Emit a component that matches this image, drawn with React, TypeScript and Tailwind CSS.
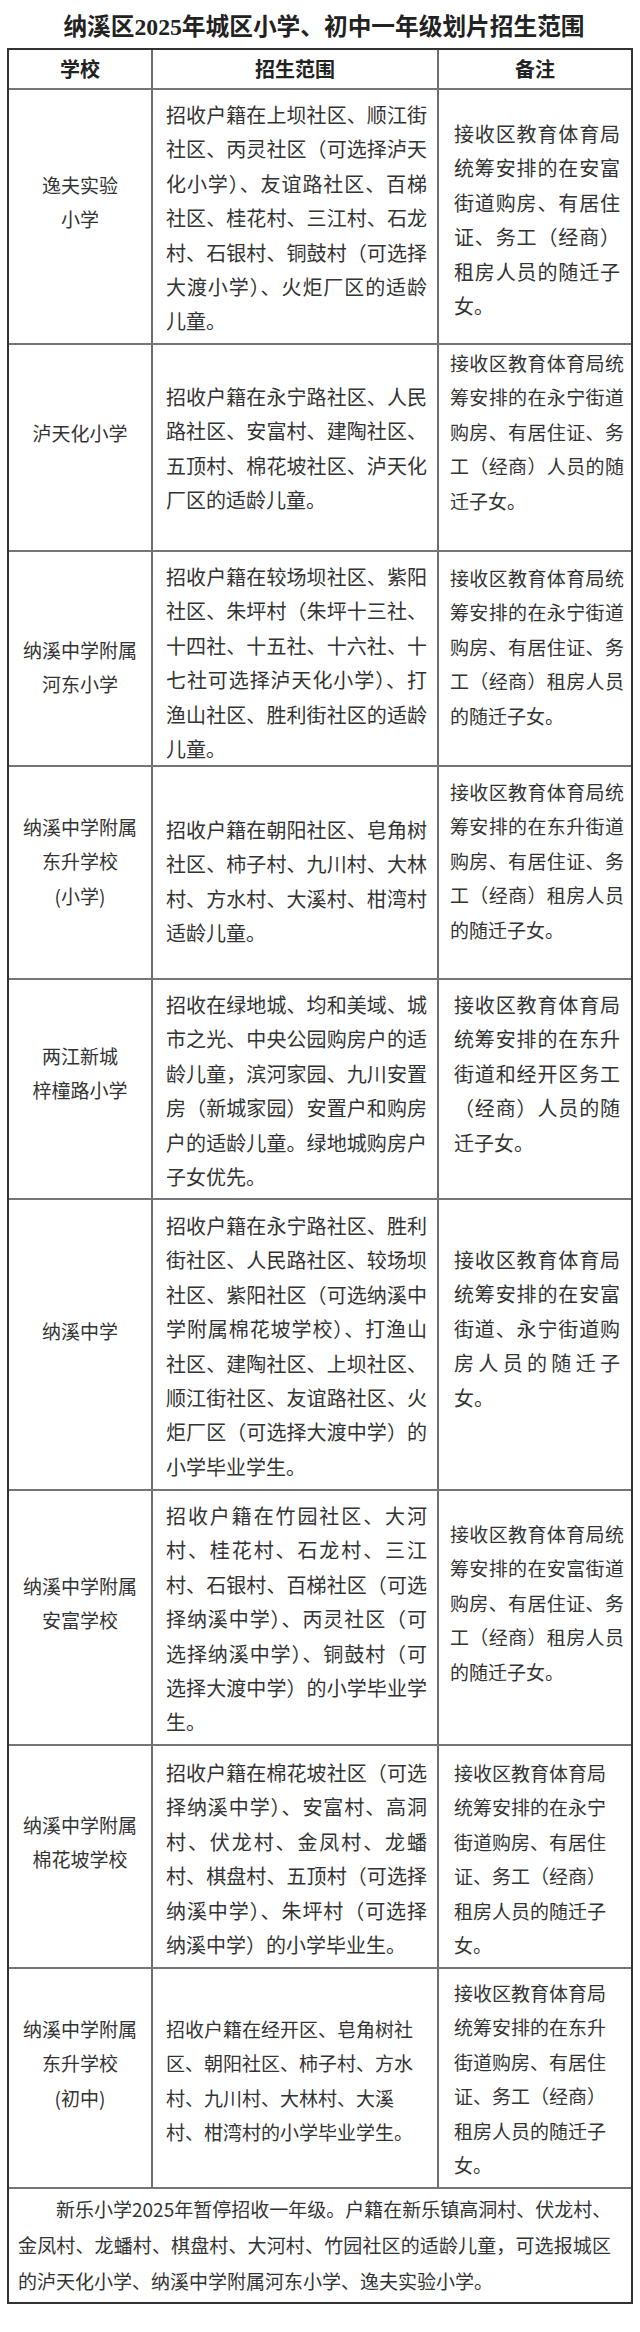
import React from "react";

type Cell = {
  lines: string[];
  cls: string;
  justify?: boolean;
};

type Row = {
  h: string;
  c1: Cell;
  c2: Cell;
  c3: Cell;
};

const C2 = "pl-[13px] pr-[10px] text-[20px]";
const C2S = "pl-[13px] pr-[10px] text-[19px]";
const C3A = "pl-[15px] pr-[11px] text-[20px]";
const C3B = "pl-[11px] pr-[7px] text-[19px]";
const C3C = "pl-[15px] pr-[11px] text-[19px]";

const rows: Row[] = [
  {
    h: "h-[255px]",
    c1: { lines: ["逸夫实验", "小学"], cls: "pt-[78px]" },
    c2: {
      lines: [
        "招收户籍在上坝社区、顺江街",
        "社区、丙灵社区（可选择泸天",
        "化小学）、友谊路社区、百梯",
        "社区、桂花村、三江村、石龙",
        "村、石银村、铜鼓村（可选择",
        "大渡小学）、火炬厂区的适龄",
        "儿童。",
      ],
      cls: "pt-[8px] " + C2,
      justify: true,
    },
    c3: {
      lines: ["接收区教育体育局", "统筹安排的在安富", "街道购房、有居住", "证、务工（经商）", "租房人员的随迁子", "女。"],
      cls: "pt-[27px] " + C3A,
      justify: true,
    },
  },
  {
    h: "h-[207px]",
    c1: { lines: ["泸天化小学"], cls: "pt-[71px]" },
    c2: {
      lines: ["招收户籍在永宁路社区、人民", "路社区、安富村、建陶社区、", "五顶村、棉花坡社区、泸天化", "厂区的适龄儿童。"],
      cls: "pt-[35px] " + C2,
      justify: true,
    },
    c3: {
      lines: ["接收区教育体育局统", "筹安排的在永宁街道", "购房、有居住证、务", "工（经商）人员的随", "迁子女。"],
      cls: "pt-[1px] " + C3B,
      justify: true,
    },
  },
  {
    h: "h-[215px]",
    c1: { lines: ["纳溪中学附属", "河东小学"], cls: "pt-[81px]" },
    c2: {
      lines: [
        "招收户籍在较场坝社区、紫阳",
        "社区、朱坪村（朱坪十三社、",
        "十四社、十五社、十六社、十",
        "七社可选择泸天化小学）、打",
        "渔山社区、胜利街社区的适龄",
        "儿童。",
      ],
      cls: "pt-[8px] " + C2,
      justify: true,
    },
    c3: {
      lines: ["接收区教育体育局统", "筹安排的在永宁街道", "购房、有居住证、务", "工（经商）租房人员", "的随迁子女。"],
      cls: "pt-[9px] " + C3B,
      justify: true,
    },
  },
  {
    h: "h-[213px]",
    c1: { lines: ["纳溪中学附属", "东升学校", "(小学)"], cls: "pt-[43px]" },
    c2: {
      lines: ["招收户籍在朝阳社区、皂角树", "社区、柿子村、九川村、大林", "村、方水村、大溪村、柑湾村", "适龄儿童。"],
      cls: "pt-[46px] " + C2,
      justify: true,
    },
    c3: {
      lines: ["接收区教育体育局统", "筹安排的在东升街道", "购房、有居住证、务", "工（经商）租房人员", "的随迁子女。"],
      cls: "pt-[8px] " + C3B,
      justify: true,
    },
  },
  {
    h: "h-[220px]",
    c1: { lines: ["两江新城", "梓橦路小学"], cls: "pt-[59px]" },
    c2: {
      lines: [
        "招收在绿地城、均和美域、城",
        "市之光、中央公园购房户的适",
        "龄儿童，滨河家园、九川安置",
        "房（新城家园）安置户和购房",
        "户的适龄儿童。绿地城购房户",
        "子女优先。",
      ],
      cls: "pt-[8px] " + C2,
      justify: true,
    },
    c3: {
      lines: ["接收区教育体育局", "统筹安排的在东升", "街道和经开区务工", "（经商）人员的随", "迁子女。"],
      cls: "pt-[8px] " + C3A,
      justify: true,
    },
  },
  {
    h: "h-[291px]",
    c1: { lines: ["纳溪中学"], cls: "pt-[114px]" },
    c2: {
      lines: [
        "招收户籍在永宁路社区、胜利",
        "街社区、人民路社区、较场坝",
        "社区、紫阳社区（可选纳溪中",
        "学附属棉花坡学校）、打渔山",
        "社区、建陶社区、上坝社区、",
        "顺江街社区、友谊路社区、火",
        "炬厂区（可选择大渡中学）的",
        "小学毕业学生。",
      ],
      cls: "pt-[9px] " + C2,
      justify: true,
    },
    c3: {
      lines: ["接收区教育体育局", "统筹安排的在安富", "街道、永宁街道购", "房人员的随迁子", "女。"],
      cls: "pt-[43px] " + C3A,
      justify: true,
    },
  },
  {
    h: "h-[255px]",
    c1: { lines: ["纳溪中学附属", "安富学校"], cls: "pt-[78px]" },
    c2: {
      lines: [
        "招收户籍在竹园社区、大河",
        "村、桂花村、石龙村、三江",
        "村、石银村、百梯社区（可选",
        "择纳溪中学）、丙灵社区（可",
        "选择纳溪中学）、铜鼓村（可",
        "选择大渡中学）的小学毕业学",
        "生。",
      ],
      cls: "pt-[8px] " + C2,
      justify: true,
    },
    c3: {
      lines: ["接收区教育体育局统", "筹安排的在安富街道", "购房、有居住证、务", "工（经商）租房人员", "的随迁子女。"],
      cls: "pt-[26px] " + C3B,
      justify: true,
    },
  },
  {
    h: "h-[223px]",
    c1: { lines: ["纳溪中学附属", "棉花坡学校"], cls: "pt-[62px]" },
    c2: {
      lines: [
        "招收户籍在棉花坡社区（可选",
        "择纳溪中学）、安富村、高洞",
        "村、伏龙村、金凤村、龙蟠",
        "村、棋盘村、五顶村（可选择",
        "纳溪中学）、朱坪村（可选择",
        "纳溪中学）的小学毕业生。",
      ],
      cls: "pt-[10px] " + C2,
      justify: true,
    },
    c3: {
      lines: ["接收区教育体育局", "统筹安排的在永宁", "街道购房、有居住", "证、务工（经商）", "租房人员的随迁子", "女。"],
      cls: "pt-[10px] " + C3C,
    },
  },
  {
    h: "h-[220px]",
    c1: { lines: ["纳溪中学附属", "东升学校", "(初中)"], cls: "pt-[43px]" },
    c2: {
      lines: ["招收户籍在经开区、皂角树社", "区、朝阳社区、柿子村、方水", "村、九川村、大林村、大溪", "村、柑湾村的小学毕业学生。"],
      cls: "pt-[43px] " + C2S,
    },
    c3: {
      lines: ["接收区教育体育局", "统筹安排的在东升", "街道购房、有居住", "证、务工（经商）", "租房人员的随迁子", "女。"],
      cls: "pt-[7px] " + C3C,
    },
  },
];

function Lines({ cell }: { cell: Cell }) {
  return (
    <>
      {cell.lines.map((l, i) => (
        <div
          key={i}
          className={
            cell.justify && i < cell.lines.length - 1
              ? "whitespace-nowrap text-justify [text-align-last:justify]"
              : "whitespace-nowrap"
          }
        >
          {l}
        </div>
      ))}
    </>
  );
}

export default function App() {
  return (
    <div className="w-[640px] h-[2332px] bg-white text-[#333] font-['Noto_Sans_CJK_SC',sans-serif]">
      <div className="h-[48px] pt-[13px] pl-[8px] text-center">
        <div className="text-[23.7px] leading-[28px] font-bold text-[#222] font-['Liberation_Serif','Noto_Sans_CJK_SC',serif]">
          纳溪区2025年城区小学、初中一年级划片招生范围
        </div>
      </div>
      <div className="ml-[7px] w-[626px] border-2 border-[#333] flex flex-col">
        <div className="h-[38px] flex text-[20px] font-bold text-[#222] leading-[28px]">
          <div className="w-[142px] shrink-0 flex items-center justify-center">学校</div>
          <div className="w-[286px] shrink-0 border-l-2 border-[#6e6e6e] flex items-center justify-center">招生范围</div>
          <div className="w-[194px] shrink-0 border-l-2 border-[#6e6e6e] flex items-center justify-center">备注</div>
        </div>
        {rows.map((r, idx) => (
          <div key={idx} className={r.h + " flex border-t-2 border-[#757575] leading-[34.4px]"}>
            <div className={"w-[142px] shrink-0 text-center text-[19px] " + r.c1.cls}>
              <Lines cell={r.c1} />
            </div>
            <div className={"w-[286px] shrink-0 border-l-2 border-[#6e6e6e] " + r.c2.cls}>
              <Lines cell={r.c2} />
            </div>
            <div className={"w-[194px] shrink-0 border-l-2 border-[#6e6e6e] " + r.c3.cls}>
              <Lines cell={r.c3} />
            </div>
          </div>
        ))}
        <div className="h-[115px] border-t-2 border-[#757575] pt-[2px] pl-[9px] pr-[20px] text-[19px] leading-[36px]">
          <div className="whitespace-nowrap pl-[38px]">新乐小学2025年暂停招收一年级。户籍在新乐镇高洞村、伏龙村、</div>
          <div className="whitespace-nowrap text-justify [text-align-last:justify]">
            金凤村、龙蟠村、棋盘村、大河村、竹园社区的适龄儿童，可选报城区
          </div>
          <div className="whitespace-nowrap">的泸天化小学、纳溪中学附属河东小学、逸夫实验小学。</div>
        </div>
      </div>
    </div>
  );
}
